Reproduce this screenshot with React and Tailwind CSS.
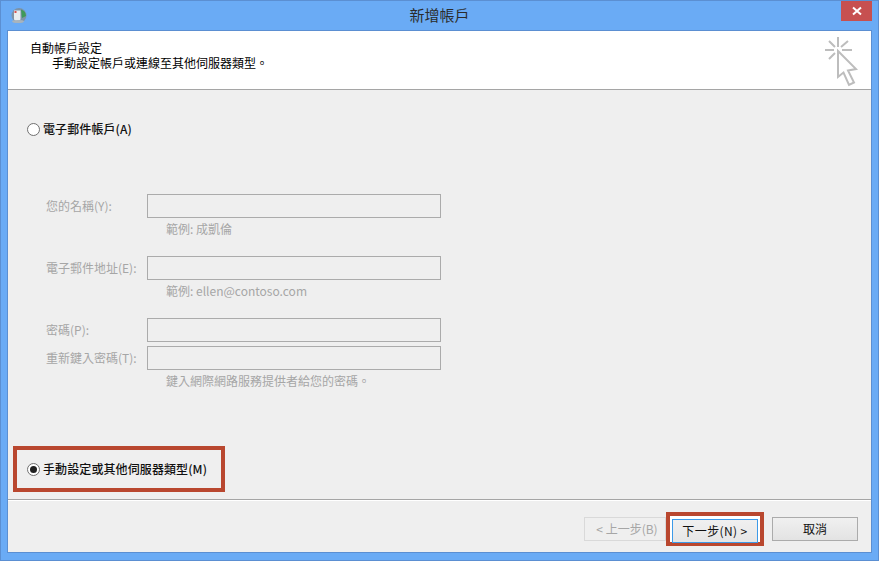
const font = { fontFamily: '"Noto Sans CJK TC", "Liberation Sans", sans-serif' };

function Radio({ checked }) {
  return (
    <span className="w-[13px] h-[13px] rounded-full border border-[#707070] bg-white flex items-center justify-center shrink-0">
      {checked && <span className="w-[7px] h-[7px] rounded-full bg-[#202020]" />}
    </span>
  );
}

function Field({ label, hint }) {
  return (
    <div>
      <div className="flex items-center h-6">
        <span className="w-[101px] pb-px text-[12px] text-[#a6a6a6] whitespace-nowrap">{label}</span>
        <div className="w-[294px] h-6 border border-[#ababab] bg-[#efefef]" />
      </div>
      <div className="h-[22px] pl-[120px] flex items-center text-[12px] text-[#a6a6a6] whitespace-nowrap">{hint}</div>
    </div>
  );
}

function Sparkle() {
  return (
    <svg width="36" height="52" viewBox="0 0 36 52" className="absolute left-[823px] top-[35px]" fill="none" stroke="#bdbdbd" strokeWidth="2">
      <path d="M14 1V11M1 14H10M18 14H28M5 5L11 11M24 5L17 11M5 23L11 17" />
      <path d="M14 15V41L19.5 36.5L25 49L30 46.5L24 34.5L32 33Z" strokeLinejoin="miter" fill="#fff" />
    </svg>
  );
}

function WinIcon() {
  return (
    <svg width="17" height="17" viewBox="0 0 17 17" className="absolute left-[9px] top-[6px]">
      <circle cx="9" cy="8.5" r="7.5" fill="#7d93a8" />
      <path d="M11 2.5A7 7 0 0 1 16 9L12 11Z" fill="#3f9a58" />
      <path d="M4 3.5H10.5V12.5L7 15L4 12.5Z" fill="#e9edf0" />
      <rect x="4.5" y="4" width="2" height="2" fill="#d9534f" />
      <ellipse cx="8" cy="14.5" rx="6" ry="1.6" fill="#a8b4bd" />
    </svg>
  );
}

export default function App() {
  return (
    <div style={font} className="relative w-[879px] h-[561px] bg-[#6aabf5] border border-[#5b8fd2] flex flex-col overflow-hidden text-black">
      <WinIcon />
      <div className="h-[29px] flex items-center justify-center text-[15px] text-[#2b2b2b] relative shrink-0">
        新增帳戶
        <div className="absolute right-[6px] top-0 w-[31px] h-5 bg-[#c75050] flex items-center justify-center">
          <svg width="10" height="10" viewBox="0 0 10 10" stroke="#fff" strokeWidth="2"><path d="M1 1.5L9 8.5M9 1.5L1 8.5" /></svg>
        </div>
      </div>
      <div className="mx-[6px] mb-[7px] flex-1 border border-[#5b8fd2] bg-[#efefef] flex flex-col min-h-0">
        <div className="h-[59px] bg-white border-b border-[#a5a5a5] shrink-0 pl-[22px] pt-[9px] text-[12px] leading-[16px]">
          <div>自動帳戶設定</div>
          <div className="pl-[22px] -mt-[1px]">手動設定帳戶或連線至其他伺服器類型。</div>
        </div>
        <div className="pt-[31px] pl-[19px] flex items-center gap-[3px] h-[47px] shrink-0 text-[12px]">
          <Radio />
          <span className="font-medium text-[#111] tracking-[0.1px]">電子郵件帳戶(A)</span>
        </div>
        <div className="pl-[38px] mt-[57px] shrink-0">
          <div className="mb-4"><Field label="您的名稱(Y):" hint="範例: 成凱倫" /></div>
          <div className="mb-4"><Field label="電子郵件地址(E):" hint="範例: ellen@contoso.com" /></div>
          <div className="flex items-center h-6 mb-1">
            <span className="w-[101px] pb-px text-[12px] text-[#a6a6a6]">密碼(P):</span>
            <div className="w-[294px] h-6 border border-[#ababab]" />
          </div>
          <Field label="重新鍵入密碼(T):" hint="鍵入網際網路服務提供者給您的密碼。" />
        </div>
        <div className="ml-[5px] mt-[54px] w-[212px] h-[46px] border-4 border-[#b9472f] pl-[10px] flex items-center gap-[3px] shrink-0 text-[12px]">
          <Radio checked />
          <span className="font-medium text-[#111] tracking-[0.1px] whitespace-nowrap">手動設定或其他伺服器類型(M)</span>
        </div>
        <div className="mt-[7px] flex-1 border-t border-[#a5a5a5] shadow-[inset_0_1px_0_#ffffff] flex items-start justify-end pr-[13px] pt-[12px]">
          <button className="w-[82px] h-6 mt-[5px] border border-[#d9d9d9] bg-[#efefef] text-[12px] text-[#a6a6a6] pl-[4px] whitespace-nowrap">&lt; 上一步(B)</button>
          <div className="w-[98px] h-[34px] border-4 border-[#b9472f] bg-white px-[2px] py-px">
            <button className="w-full h-full border border-[#3c9ae8] bg-gradient-to-b from-[#f0f0f0] to-[#e6e6e6] text-[12px] text-[#111] tracking-[0.4px] whitespace-nowrap">下一步(N) &gt;</button>
          </div>
          <button className="w-[86px] h-6 mt-[5px] ml-2 border border-[#ababab] bg-gradient-to-b from-[#f0f0f0] to-[#e3e3e3] text-[12px] text-[#111]">取消</button>
        </div>
      </div>
      <Sparkle />
    </div>
  );
}
